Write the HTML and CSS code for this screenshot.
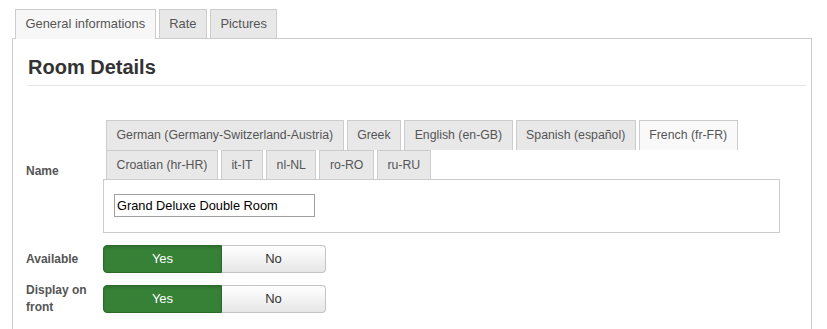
FILE: index.html
```html
<!DOCTYPE html>
<html>
<head>
<meta charset="utf-8">
<link rel="stylesheet" href="styles.css">
</head>
<body>
<div class="wrap">
  <ul class="main-tabs">
    <li class="tab active">General informations</li>
    <li class="tab">Rate</li>
    <li class="tab">Pictures</li>
  </ul>
  <div class="panel">
    <h3 class="title">Room Details</h3>
    <div class="rule"></div>
    <div class="row row-name">
      <div class="label label-name">Name</div>
      <div class="control">
        <ul class="lang-tabs">
          <li class="ltab">German (Germany-Switzerland-Austria)</li>
          <li class="ltab">Greek</li>
          <li class="ltab">English (en-GB)</li>
          <li class="ltab">Spanish (español)</li>
          <li class="ltab active">French (fr-FR)</li>
          <li class="ltab">Croatian (hr-HR)</li>
          <li class="ltab">it-IT</li>
          <li class="ltab">nl-NL</li>
          <li class="ltab">ro-RO</li>
          <li class="ltab">ru-RU</li>
        </ul>
        <div class="lang-content">
          <input class="text-input" type="text" value="Grand Deluxe Double Room">
        </div>
      </div>
    </div>
    <div class="row row-toggle">
      <div class="label label-toggle">Available</div>
      <div class="toggle">
        <span class="btn yes">Yes</span><span class="btn no">No</span>
      </div>
    </div>
    <div class="row row-toggle">
      <div class="label label-toggle">Display on front</div>
      <div class="toggle">
        <span class="btn yes">Yes</span><span class="btn no">No</span>
      </div>
    </div>
  </div>
</div>
</body>
</html>
```

FILE: styles.css
```css
* { box-sizing: border-box; }
html, body { margin: 0; padding: 0; background: #fff; }
body {
  font-family: "Liberation Sans", Arial, sans-serif;
  font-size: 13px;
  color: #333;
  overflow: hidden;
}
.wrap {
  padding: 9px 0 0 12px;
  width: 812px;
}
.main-tabs {
  list-style: none;
  margin: 0;
  padding: 0 0 0 3px;
  display: flex;
  gap: 3px;
  position: relative;
  z-index: 1;
}
.tab {
  height: 29px;
  line-height: 28px;
  padding: 0 9.5px;
  border: 1px solid #ccc;
  border-bottom: none;
  background: #e8e8e8;
  color: #555;
  font-size: 12.9px;
}
.tab.active {
  background: #f7f7f7;
  height: 30px;
  margin-bottom: -1px;
}
.panel {
  border: 1px solid #ccc;
  padding: 0 5px 40px 13px;
  background: #fff;
}
.title {
  margin: 16px 0 0 2px;
  font-size: 20px;
  line-height: 24px;
  font-weight: bold;
  color: #333;
}
.rule {
  margin: 6px 0 0 2px;
  height: 1px;
  background: #e5e5e5;
}
.row {
  display: flex;
  align-items: center;
}
.row-name { margin-top: 34px; }
.row-toggle { margin-top: 12px; }
.label {
  width: 70px;
  margin-right: 7px;
  font-size: 12px;
  font-weight: bold;
  line-height: 17px;
  color: #555;
  flex: none;
}
.label-name { padding-bottom: 10px; }
.label-toggle { margin-top: -4px; margin-bottom: -4px; }
.control { width: 677px; }
.lang-tabs {
  list-style: none;
  margin: 0 0 -1px 0;
  padding: 0 0 0 3px;
  display: flex;
  flex-wrap: wrap;
  column-gap: 3px;
}
.ltab {
  height: 30px;
  line-height: 29px;
  padding: 0 9.5px;
  border: 1px solid #ccc;
  border-bottom: none;
  background: #e8e8e8;
  color: #555;
  font-size: 12.3px;
}
.ltab.active { background: #f9f9f9; }
.lang-content {
  border: 1px solid #ccc;
  background: #fff;
  padding: 14px 10px 15px 10px;
  position: relative;
}
.text-input {
  display: block;
  width: 201px;
  height: 23px;
  margin: 0;
  padding: 0 2px;
  border: 1px solid #a0a0a0;
  font-family: "Liberation Sans", Arial, sans-serif;
  font-size: 12.8px;
  color: #000;
  background: #fff;
  outline: none;
}
.toggle { display: flex; }
.btn {
  display: block;
  height: 28px;
  line-height: 26px;
  text-align: center;
  font-size: 13px;
}
.btn.yes {
  width: 119px;
  background: #378137;
  border: 1px solid #2b6a2b;
  border-radius: 4px 0 0 4px;
  color: #fff;
  box-shadow: inset 0 2px 3px rgba(0,0,0,0.12);
}
.btn.no {
  width: 104px;
  background: linear-gradient(#ffffff, #e6e6e6);
  border: 1px solid #c4c4c4;
  border-left: none;
  border-radius: 0 4px 4px 0;
  color: #333;
}
```
